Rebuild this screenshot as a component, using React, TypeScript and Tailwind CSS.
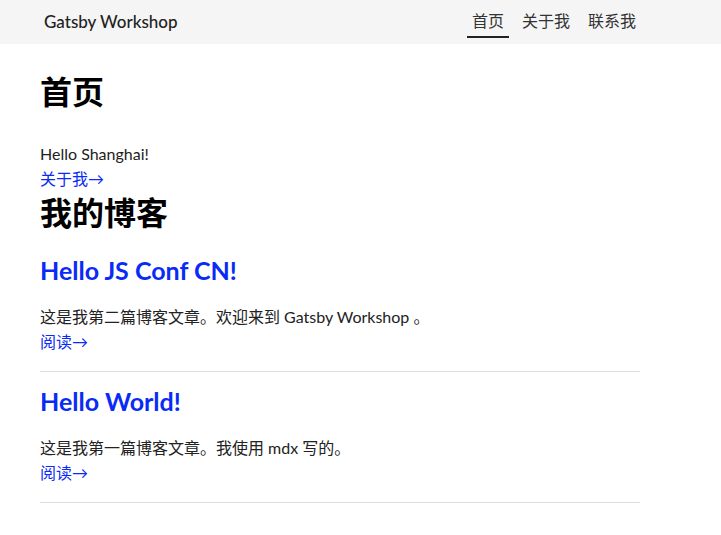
import React from "react";

interface Post {
  id: string;
  title: string;
  excerpt: string;
}

const posts: Post[] = [
  { id: "js-conf", title: "Hello JS Conf CN!", excerpt: "这是我第二篇博客文章。欢迎来到 Gatsby Workshop 。" },
  { id: "world", title: "Hello World!", excerpt: "这是我第一篇博客文章。我使用 mdx 写的。" },
];

const font = "font-['Lato','Noto_Sans_CJK_SC',sans-serif]";

export default function App() {
  return (
    <div className={`min-h-screen bg-white text-black ${font}`}>
      <header className="h-[44px] bg-[#f5f5f5] flex items-center justify-between pl-[44px] pr-[80px]">
        <div className="text-[17px] font-medium text-[#222]">Gatsby Workshop</div>
        <nav className="flex h-full items-start gap-[8px] text-[16px] text-[#333]">
          <a className="flex h-[38px] items-center px-[5px] pt-[5px] border-b-2 border-[#222]">首页</a>
          <a className="flex h-[38px] items-center px-[5px] pt-[5px] border-b-2 border-transparent">关于我</a>
          <a className="flex h-[38px] items-center px-[5px] pt-[5px] border-b-2 border-transparent">联系我</a>
        </nav>
      </header>

      <main className="w-[600px] ml-[40px] pt-[28px]">
        <h1 className="text-[32px] font-bold leading-[40px]">首页</h1>
        <p className="mt-[29px] text-[16px] leading-[25px] text-[#222]">Hello Shanghai!</p>
        <a className="block text-[16px] leading-[25px] text-[#0a2bf5]">关于我→</a>
        <h2 className="text-[32px] font-bold leading-[40px] mt-[2px]">我的博客</h2>

        <div className="mt-[8px]">
          {posts.map((post) => (
            <article key={post.id} className="border-b border-[#ddd] pt-[9px] pb-[17px]">
              <h3 className="text-[25px] font-bold leading-[40px] text-[#0a2bf5]">{post.title}</h3>
              <p className="mt-[14px] text-[16px] leading-[25px] text-[#222]">{post.excerpt}</p>
              <a className="block text-[16px] leading-[25px] text-[#0a2bf5]">阅读→</a>
            </article>
          ))}
        </div>
      </main>
    </div>
  );
}
